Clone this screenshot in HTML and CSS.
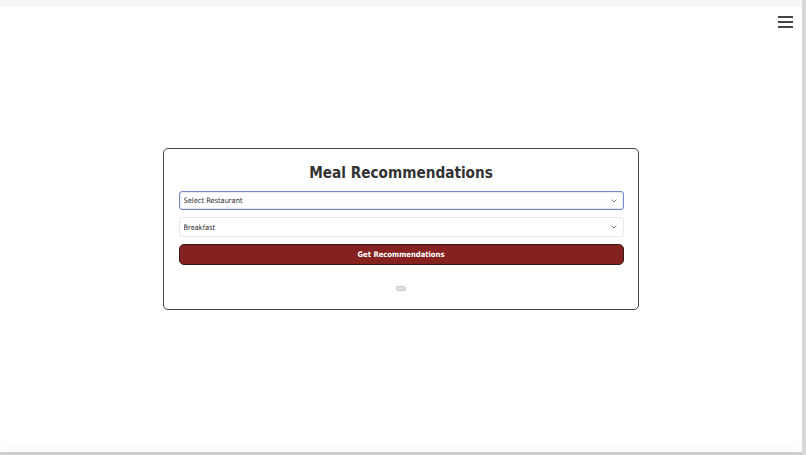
FILE: index.html
```html
<!DOCTYPE html>
<html lang="en">
<head>
<meta charset="UTF-8">
<meta name="viewport" content="width=device-width, initial-scale=1.0">
<title>Meal Recommendations</title>
<link rel="stylesheet" href="styles.css">
</head>
<body>

<div class="window">
  <div class="topbar"></div>

  <div class="page">
    <button class="menu-button" aria-label="Menu">
      <span></span><span></span><span></span>
    </button>

    <div class="card">
      <h1 class="title">Meal Recommendations</h1>

      <div class="select-wrap">
        <select class="select focused" id="restaurantSelect">
          <option>Select Restaurant</option>
        </select>
        <svg class="chevron" width="6" height="4" viewBox="0 0 6 4"><path d="M0.7 0.7 L3 3 L5.3 0.7" fill="none" stroke="#666" stroke-width="0.9"/></svg>
      </div>

      <div class="select-wrap">
        <select class="select" id="mealSelect">
          <option>Breakfast</option>
          <option>Lunch</option>
          <option>Dinner</option>
        </select>
        <svg class="chevron" width="6" height="4" viewBox="0 0 6 4"><path d="M0.7 0.7 L3 3 L5.3 0.7" fill="none" stroke="#666" stroke-width="0.9"/></svg>
      </div>

      <button class="button" id="getButton">Get Recommendations</button>

      <div class="results" id="results"></div>
    </div>
  </div>

  <div class="bottombar"></div>
</div>

</body>
</html>
```

FILE: styles.css
```css
html, body {
  margin: 0;
  padding: 0;
  height: 100%;
}
body {
  font-family: "DejaVu Sans Condensed", "DejaVu Sans", sans-serif;
  font-stretch: condensed;
  background-color: #fff;
  overflow: hidden;
}
.window {
  display: flex;
  flex-direction: column;
  height: 100vh;
  border-right: 4px solid #dad8d6;
}
.topbar {
  height: 5px;
  background-color: #f7f6f4;
  border-bottom: 1px solid #efeeec;
}
.bottombar {
  height: 3px;
  background-color: #cfcdcb;
  box-shadow: 0 -6px 10px rgba(0, 0, 0, 0.05);
}
.page {
  position: relative;
  flex: 1;
  display: flex;
  justify-content: center;
  align-items: center;
}
.menu-button {
  position: absolute;
  top: 10px;
  right: 9px;
  display: flex;
  flex-direction: column;
  gap: 3px;
  padding: 0;
  background: none;
  border: none;
}
.menu-button span {
  display: block;
  width: 15px;
  height: 2px;
  background-color: #444;
}
.card {
  width: 445px;
  padding: 14px 14.5px 18px;
  border: 1.5px solid #444;
  border-radius: 5px;
  display: flex;
  flex-direction: column;
  gap: 7px;
}
.title {
  margin: 0 0 1.5px;
  text-align: center;
  font-size: 15.2px;
  font-weight: bold;
  color: #333;
  line-height: 20px;
}
.select-wrap {
  position: relative;
}
.select {
  -webkit-appearance: none;
  appearance: none;
  display: block;
  width: 100%;
  height: 20px;
  padding: 0 4px;
  border: 1px solid #e8e8e8;
  border-radius: 3px;
  background-color: #fff;
  font-family: "DejaVu Sans Condensed", "DejaVu Sans", sans-serif;
  font-stretch: condensed;
  font-size: 7.4px;
  color: #2b2b2b;
  outline: none;
}
.select.focused {
  height: 19px;
  border: 1.5px solid #7389c4;
  box-shadow: inset 0 0 2px rgba(60, 80, 140, 0.4);
}
.chevron {
  position: absolute;
  right: 7px;
  top: 8px;
}
.button {
  height: 21px;
  border: 1px solid #3b1816;
  border-radius: 5px;
  background-color: #85221f;
  color: #fff;
  font-family: "DejaVu Sans Condensed", "DejaVu Sans", sans-serif;
  font-stretch: condensed;
  font-size: 7.6px;
  font-weight: bold;
  cursor: pointer;
}
.results {
  align-self: center;
  width: 8px;
  height: 3px;
  margin-top: 14px;
  border: 0.5px solid #c9c9c9;
  border-radius: 2px;
  background-color: #dedede;
}
```
